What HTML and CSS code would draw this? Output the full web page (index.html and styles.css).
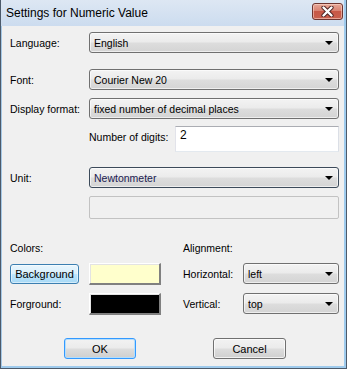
FILE: index.html
```html
<!DOCTYPE html>
<html>
<head>
<meta charset="utf-8">
<link rel="stylesheet" href="styles.css">
</head>
<body>
<div class="window">
  <div class="frame">
    <div class="titlebar">
      <span class="title">Settings for Numeric Value</span>
      <div class="close">
        <svg width="13" height="11" viewBox="0 0 13 11">
          <path d="M2.5 1.5 L10.5 9.5 M10.5 1.5 L2.5 9.5" stroke="#4a2020" stroke-width="4.2" stroke-linecap="round"/>
          <path d="M2.5 1.5 L10.5 9.5 M10.5 1.5 L2.5 9.5" stroke="#ffffff" stroke-width="2.4" stroke-linecap="round"/>
        </svg>
      </div>
    </div>
    <div class="client">
      <div class="row r-language">
        <span class="label">Language:</span>
        <div class="combo"><span>English</span><i class="arrow"></i></div>
      </div>
      <div class="row r-font">
        <span class="label">Font:</span>
        <div class="combo"><span>Courier New 20</span><i class="arrow"></i></div>
      </div>
      <div class="row r-display">
        <span class="label">Display format:</span>
        <div class="combo"><span>fixed number of decimal places</span><i class="arrow"></i></div>
      </div>
      <div class="row r-digits">
        <span class="label-digits">Number of digits:</span>
        <div class="textbox">2</div>
      </div>
      <div class="row r-unit">
        <span class="label">Unit:</span>
        <div class="combo combo-focus"><span>Newtonmeter</span><i class="arrow"></i></div>
      </div>
      <div class="row r-disabled">
        <div class="disabled-box"></div>
      </div>
      <div class="lower">
        <div class="colors">
          <span class="cell-label">Colors:</span>
          <span></span>
          <div class="cell"><div class="btn btn-hot">Background</div></div>
          <div class="swatch swatch-bg"></div>
          <span class="cell-label">Forground:</span>
          <div class="swatch swatch-fg"></div>
        </div>
        <div class="align">
          <span class="cell-label">Alignment:</span>
          <span></span>
          <span class="cell-label">Horizontal:</span>
          <div class="combo small"><span>left</span><i class="arrow"></i></div>
          <span class="cell-label">Vertical:</span>
          <div class="combo small"><span>top</span><i class="arrow"></i></div>
        </div>
      </div>
      <div class="buttons">
        <div class="btn btn-default ok">OK</div>
        <div class="btn cancel">Cancel</div>
      </div>
    </div>
  </div>
</div>
</body>
</html>
```

FILE: styles.css
```css
html, body {
  margin: 0;
  padding: 0;
  background: #f0f0f0;
}
body {
  font-family: "Liberation Sans", Arial, sans-serif;
  font-size: 10.5px;
  color: #000;
}
.window {
  width: 347px;
  height: 369px;
  box-sizing: border-box;
  border: 1px solid #4c5a6a;
  border-top: 0;
  background: #9fcbed;
}
.frame {
  height: 100%;
  box-sizing: border-box;
  border-left: 1px solid #a5c8e6;
  border-right: 2px solid #9fcbed;
  border-bottom: 2px solid #9fcbed;
  display: flex;
  flex-direction: column;
}
.titlebar {
  height: 26px;
  background: linear-gradient(#dde7f3, #ccdcef);
  display: flex;
  align-items: center;
  justify-content: space-between;
  padding: 0 1px 0 5px;
  margin-left: -1px;
}
.title {
  font-family: "Liberation Sans", Arial, sans-serif;
  font-size: 12px;
  color: #000;
  margin-top: -1px;
}
.close {
  width: 29px;
  height: 15px;
  border: 1px solid #6e3530;
  border-radius: 3px;
  background: linear-gradient(#e7a898 0%, #d98272 45%, #c75847 50%, #c9604e 100%);
  box-shadow: inset 0 0 0 1px rgba(255, 220, 210, 0.55);
  display: flex;
  align-items: center;
  justify-content: center;
  margin-top: -3px;
}
.client {
  flex: 1;
  background: #f0f0f0;
  padding: 6px 5px 0 8px;
}
.row {
  display: flex;
  align-items: center;
}
.label {
  width: 79px;
  flex: none;
}
.combo {
  flex: 1;
  height: 21px;
  box-sizing: border-box;
  border: 1px solid #707070;
  border-radius: 3px;
  background: linear-gradient(#f3f3f3 0%, #ebebeb 48%, #dddddd 52%, #d4d4d4 100%);
  box-shadow: inset 0 0 0 1px rgba(255, 255, 255, 0.6);
  display: flex;
  align-items: center;
  justify-content: space-between;
  padding: 0 5px 0 4px;
}
.combo span {
  margin-top: 0px;
}
.combo-focus {
  border-color: #3c4a5a;
}
.combo-focus span {
  color: #1a1a50;
}
.arrow {
  width: 0;
  height: 0;
  border-left: 4px solid transparent;
  border-right: 4px solid transparent;
  border-top: 4px solid #000;
  margin-top: 1px;
}
.r-font { margin-top: 16px; }
.r-display { margin-top: 8px; }
.r-digits {
  margin-top: 7px;
  padding-left: 79px;
  align-items: flex-start;
}
.label-digits {
  width: 86px;
  flex: none;
  margin-top: 5px;
}
.textbox {
  flex: 1;
  height: 26px;
  box-sizing: border-box;
  background: #fff;
  border: 1px solid #abadb3;
  border-color: #abadb3 #dbdfe6 #e3e9ef #e2e3ea;
  padding: 1px 4px;
  font-size: 12px;
}
.r-unit { margin-top: 15px; }
.r-disabled {
  margin-top: 8px;
  padding-left: 79px;
}
.disabled-box {
  flex: 1;
  height: 23px;
  box-sizing: border-box;
  border: 1px solid #c2c2c2;
  border-radius: 2px;
  background: #f0f0f0;
}
.lower {
  margin-top: 22px;
  display: flex;
  gap: 22px;
}
.colors {
  display: grid;
  grid-template-columns: 79px 72px;
  grid-template-rows: 14px 23px 23px;
  row-gap: 7px;
  align-items: center;
}
.align {
  flex: 1;
  display: grid;
  grid-template-columns: 60px 1fr;
  grid-template-rows: 14px 23px 23px;
  row-gap: 7px;
  align-items: center;
}
.align .combo {
  height: 21px;
}
.cell-label {
  white-space: nowrap;
}
.cell { display: flex; }
.btn {
  height: 20px;
  box-sizing: border-box;
  border: 1px solid #707070;
  border-radius: 3px;
  background: linear-gradient(#f2f2f2 0%, #ebebeb 48%, #dddddd 52%, #cfcfcf 100%);
  box-shadow: inset 0 0 0 1px rgba(255, 255, 255, 0.7);
  display: flex;
  align-items: center;
  justify-content: center;
  font-size: 11px;
}
.btn-hot {
  width: 69px;
  border-color: #3c7fb1;
  background: linear-gradient(#eaf6fd 0%, #d9f0fc 48%, #bee6fd 52%, #a7d9f5 100%);
  box-shadow: inset 0 0 0 1px rgba(255, 255, 255, 0.5);
}
.swatch {
  height: 22px;
  box-sizing: border-box;
  border-style: solid;
  border-width: 1px 2px 2px 1px;
  border-color: #ffffff #808080 #808080 #ffffff;
  box-shadow: inset 1px 1px 0 #e3e3e3;
}
.swatch-bg { background: #ffffcc; }
.swatch-fg { background: #000000; }
.buttons {
  margin-top: 23px;
  display: flex;
  padding-left: 54px;
  gap: 77px;
}
.ok {
  width: 72px;
  height: 21px;
}
.btn-default {
  border-color: #3399ff;
  box-shadow: inset 0 0 0 1px #b5defc;
}
.cancel {
  width: 73px;
  height: 21px;
}
```
